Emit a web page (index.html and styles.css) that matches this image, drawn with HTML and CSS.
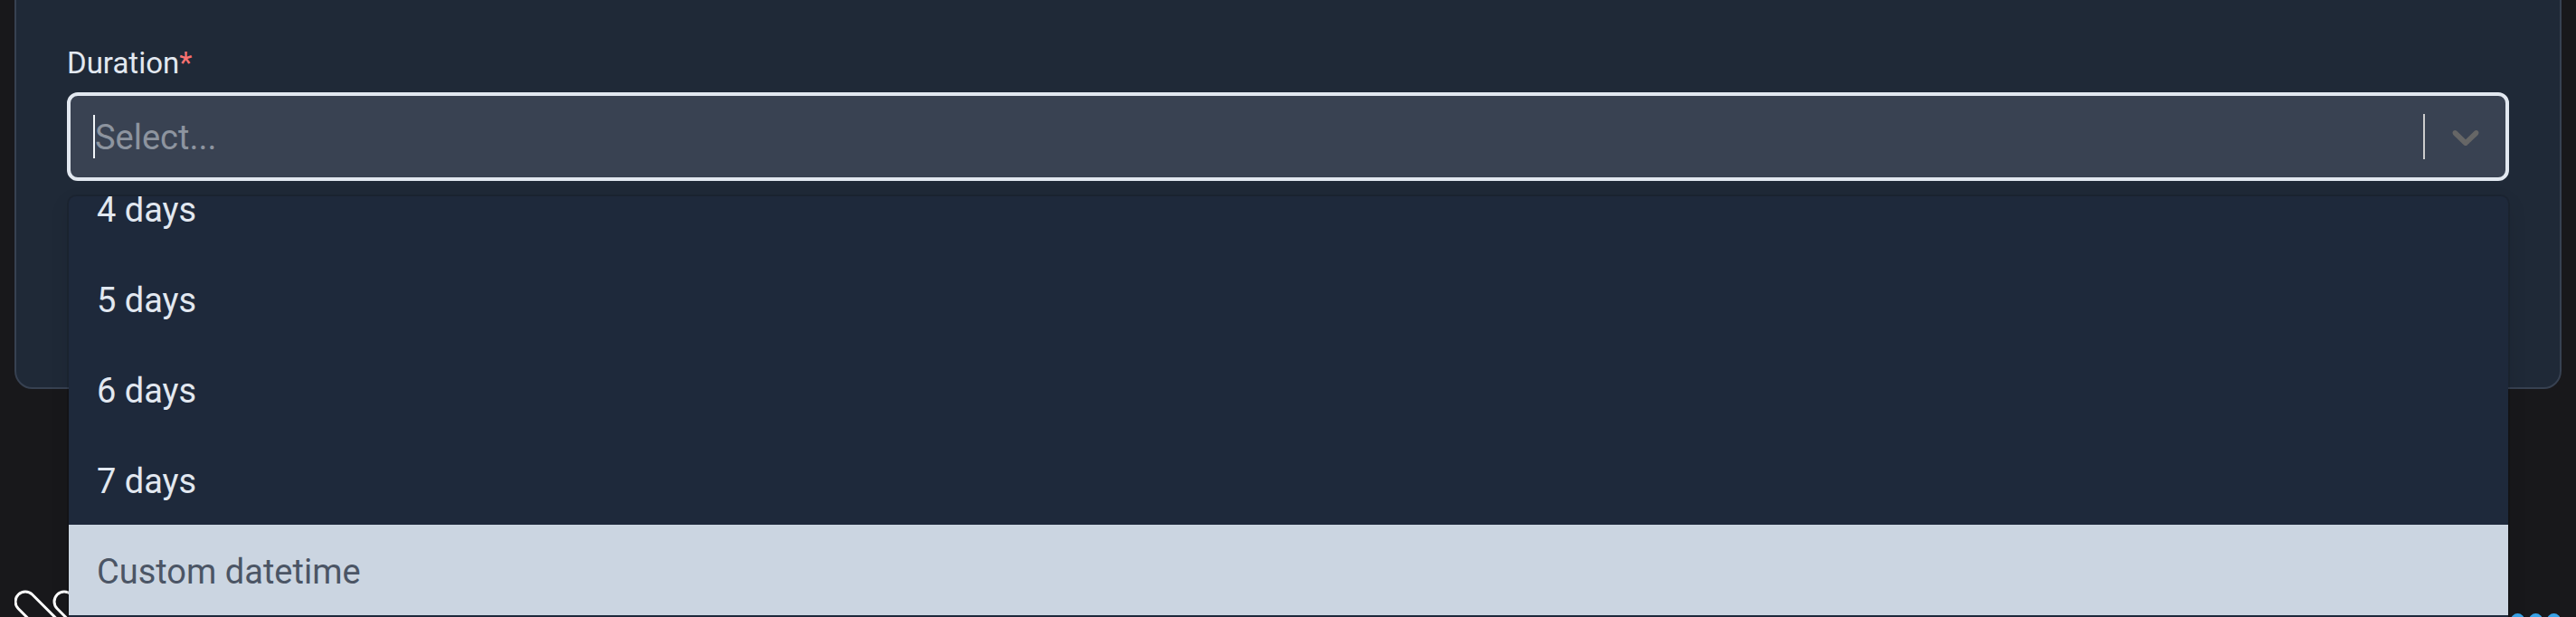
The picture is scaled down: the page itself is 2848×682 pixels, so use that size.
FILE: index.html
```html
<!DOCTYPE html>
<html lang="en">
<head>
    <meta charset="UTF-8">
    <meta name="viewport" content="width=device-width, initial-scale=1.0">
    <title>Duration</title>
    <link rel="stylesheet" href="styles.css">
</head>
<body>
<div class="page">

    <div class="card">
        <div class="field">
            <label class="field-label">Duration<span class="required">*</span></label>

            <div class="select">
                <div class="select-control">
                    <div class="select-value">
                        <span class="caret"></span>
                        <span class="placeholder">Select...</span>
                    </div>
                    <div class="select-indicators">
                        <span class="separator"></span>
                        <svg class="chevron" viewBox="0 0 20 20" aria-hidden="true">
                            <path d="M4.516 7.548c0.436-0.446 1.043-0.481 1.576 0l3.908 3.747 3.908-3.747c0.533-0.481 1.141-0.446 1.574 0 0.436 0.445 0.408 1.197 0 1.615-0.406 0.418-4.695 4.502-4.695 4.502-0.217 0.223-0.502 0.335-0.787 0.335s-0.57-0.112-0.789-0.335c0 0-4.287-4.084-4.695-4.502s-0.436-1.17 0-1.615z"></path>
                        </svg>
                    </div>
                </div>

                <!-- open menu, list scrolled down to "4 days" -->
                <div class="select-menu">
                    <div class="menu-list">
                        <div class="option">4 days</div>
                        <div class="option">5 days</div>
                        <div class="option">6 days</div>
                        <div class="option">7 days</div>
                        <div class="option focused">Custom datetime</div>
                    </div>
                </div>
            </div>
        </div>
    </div>

    <div class="footer">
        <svg class="attach-icon" viewBox="0 0 80 40" aria-hidden="true">
            <rect x="1" y="5" width="60" height="22" rx="11" transform="rotate(45 12 16)"></rect>
            <rect x="44" y="5" width="60" height="22" rx="11" transform="rotate(45 55 16)"></rect>
        </svg>
        <div class="loader">
            <span></span>
            <span></span>
            <span></span>
        </div>
    </div>

</div>
</body>
</html>
```

FILE: styles.css
```css
html, body {
    margin: 0;
    height: 100%;
}

body {
    background-color: #18181b;
    font-family: Roboto, "Liberation Sans", Arial, sans-serif;
    color: #e2e8f0;
    overflow: hidden;
}

.page {
    padding: 0 16px;
}

.card {
    margin-top: -24px;
    padding: 72px 56px 228px;
    background-color: #1f2937;
    border: 2px solid #374151;
    border-radius: 20px;
}

.field-label {
    display: block;
    font-size: 33px;
    line-height: 40px;
    margin-bottom: 12px;
}

.required {
    color: #f87171;
}

.select {
    position: relative;
}

.select-control {
    display: flex;
    align-items: center;
    height: 90px;
    background-color: #394252;
    border: 4px solid #e2e8f0;
    border-radius: 12px;
}

.select-value {
    flex: 1;
    display: flex;
    align-items: center;
    padding-left: 25px;
}

.caret {
    width: 2px;
    height: 48px;
    background-color: #f1f5f9;
}

.placeholder {
    font-size: 38px;
    color: #8d949f;
    padding-top: 2px;
}

.select-indicators {
    display: flex;
    align-items: center;
    padding-right: 19px;
}

.separator {
    width: 2px;
    height: 50px;
    margin-right: 20px;
    background-color: #cccccc;
}

.chevron {
    width: 50px;
    height: 50px;
    fill: #666666;
}

.select-menu {
    position: absolute;
    top: calc(100% + 17px);
    left: 2px;
    right: 1px;
    z-index: 10;
    height: 480px;
    overflow: hidden;
    background-color: #1e293b;
    border-radius: 8px;
    box-shadow: 0 0 0 2px rgba(0, 0, 0, 0.1), 0 8px 22px rgba(0, 0, 0, 0.1);
}

.menu-list {
    margin-top: -37px;
}

.option {
    height: 100px;
    box-sizing: border-box;
    display: flex;
    align-items: center;
    padding: 4px 0 0 31px;
    font-size: 38px;
    color: #e2e8f0;
}

.option.focused {
    background-color: #cbd5e1;
    color: #4b5565;
}

.footer {
    display: flex;
    justify-content: space-between;
    align-items: flex-start;
    margin-top: 219px;
}

.attach-icon {
    width: 80px;
    height: 40px;
    fill: none;
    stroke: #ffffff;
    stroke-width: 3;
}

.loader {
    display: flex;
    gap: 5px;
    padding-top: 29px;
    padding-right: 1px;
}

.loader span {
    width: 15px;
    height: 15px;
    border-radius: 50%;
    background-color: #38a3e8;
}
```
